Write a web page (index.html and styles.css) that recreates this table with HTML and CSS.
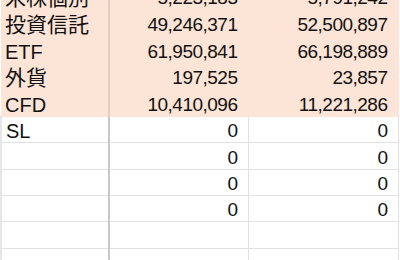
FILE: index.html
```html
<!DOCTYPE html>
<html lang="ja">
<head>
<meta charset="utf-8">
<link rel="stylesheet" href="styles.css">
</head>
<body>
<div class="sheet">
<table class="grid">
<colgroup><col class="c1"><col class="c2"><col class="c3"></colgroup>
<tr class="fill h27"><td class="label jp">米株個別</td><td class="num">5,223,183</td><td class="num">5,791,242</td></tr>
<tr class="fill h26"><td class="label jp">投資信託</td><td class="num">49,246,371</td><td class="num">52,500,897</td></tr>
<tr class="fill h27"><td class="label">ETF</td><td class="num">61,950,841</td><td class="num">66,198,889</td></tr>
<tr class="fill h26"><td class="label jp">外貨</td><td class="num">197,525</td><td class="num">23,857</td></tr>
<tr class="fill h27"><td class="label">CFD</td><td class="num">10,410,096</td><td class="num">11,221,286</td></tr>
<tr class="plain h26"><td class="label">SL</td><td class="num">0</td><td class="num">0</td></tr>
<tr class="plain h27"><td class="label"></td><td class="num">0</td><td class="num">0</td></tr>
<tr class="plain h26"><td class="label"></td><td class="num">0</td><td class="num">0</td></tr>
<tr class="plain h26"><td class="label"></td><td class="num">0</td><td class="num">0</td></tr>
<tr class="plain h27"><td class="label"></td><td class="num"></td><td class="num"></td></tr>
<tr class="plain h27"><td class="label"></td><td class="num"></td><td class="num"></td></tr>
</table>
</div>
</body>
</html>
```
FILE: styles.css
```css
html, body {
  margin: 0;
  padding: 0;
  background: #ffffff;
}
.sheet {
  width: 400px;
  height: 260px;
  overflow: hidden;
}
.grid {
  border-collapse: collapse;
  table-layout: fixed;
  width: 397px;
  margin-top: -17px;
  font-family: "Liberation Sans", "Noto Sans CJK JP", sans-serif;
  font-size: 20px;
  color: #111111;
}
.c1 { width: 108px; }
.c2 { width: 139px; }
.c3 { width: 150px; }
.h26 td { height: 26px; }
.h27 td { height: 27px; }
td {
  padding: 4px 10px 0 4px;
  white-space: nowrap;
  overflow: hidden;
  vertical-align: middle;
  line-height: 20px;
  box-sizing: border-box;
}
.label {
  text-align: left;
}
.jp {
  font-size: 21px;
}
.num {
  text-align: right;
  font-size: 19px;
  letter-spacing: -0.5px;
}
.fill td {
  background: #fce4d6;
  border-right: 1px solid #fce4d6;
  border-bottom: 1px solid #fce4d6;
}
.fill td.label {
  border-right: 2px solid #e5cdc0;
}
.plain td {
  border-right: 1px solid #e1e1e1;
  border-bottom: 1px solid #e1e1e1;
}
.plain td.label {
  border-left: 2px solid #e6e6e6;
  border-right: 2px solid #c8c8c8;
}
```
